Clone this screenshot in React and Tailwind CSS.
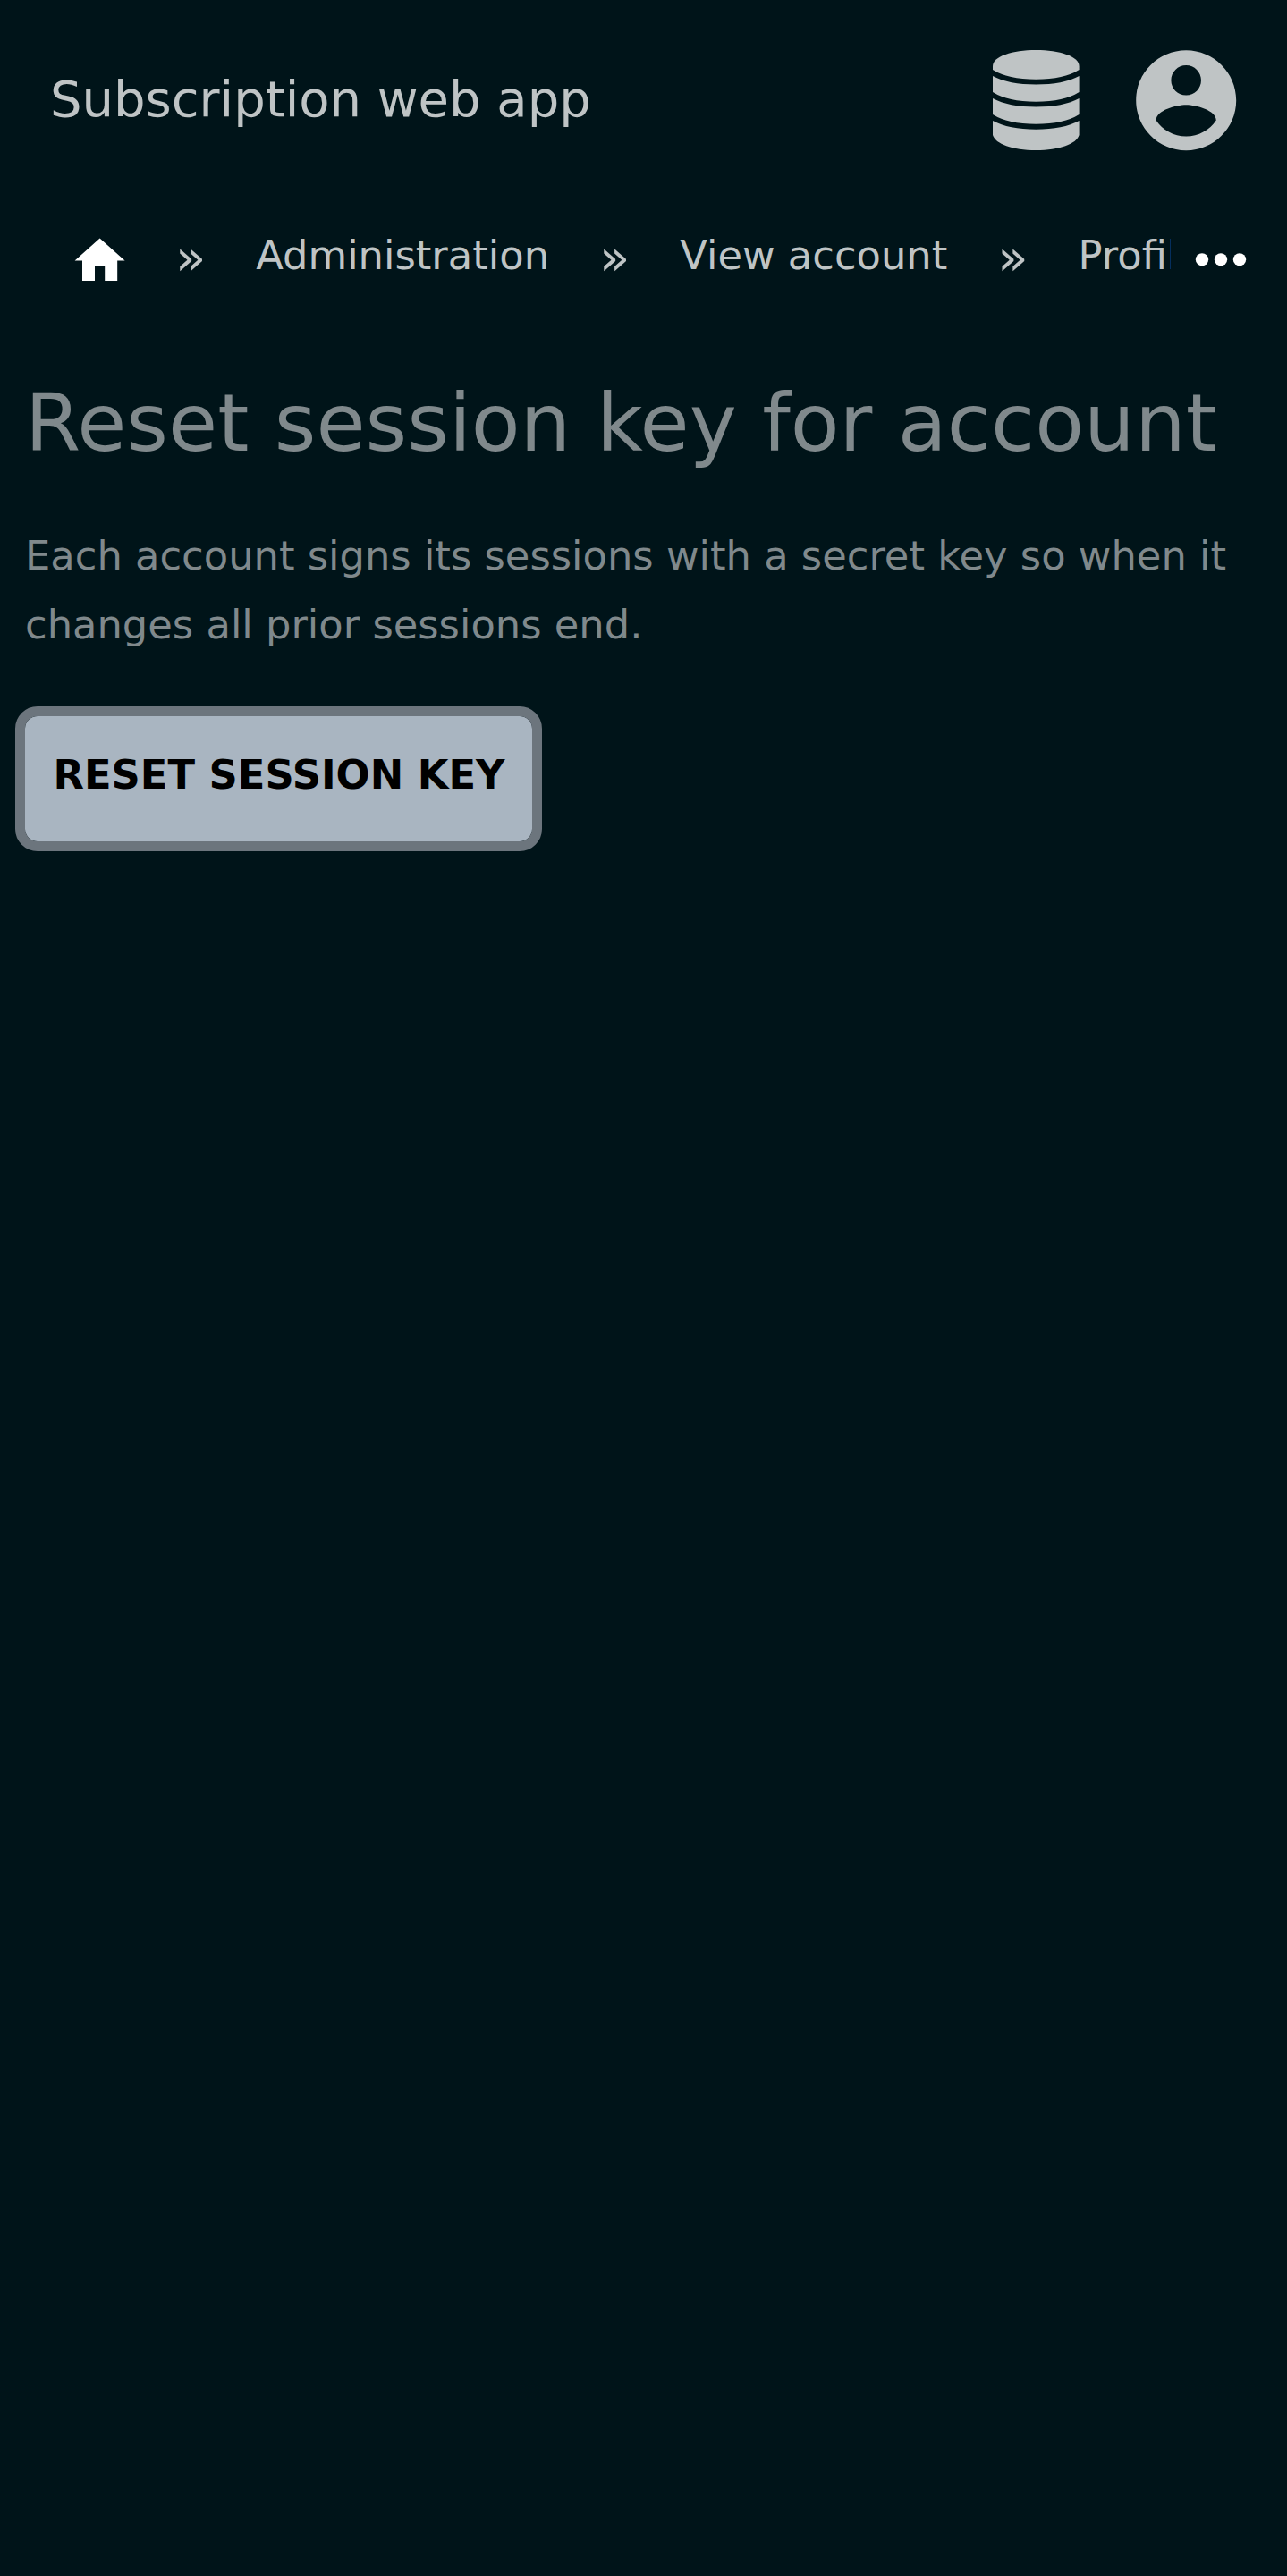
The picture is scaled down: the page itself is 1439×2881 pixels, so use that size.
import React from "react";

function Separator() {
  return <span className="mb-[6px] shrink-0 text-[56px] leading-[84px]">»</span>;
}

function Crumb({ children }) {
  return <span className="mb-[10px] shrink-0 whitespace-nowrap px-[56px]">{children}</span>;
}

export default function App() {
  return (
    <div className="min-h-[2881px] w-full overflow-hidden bg-[#001419] font-['DejaVu_Sans',sans-serif] text-[44.8px] text-[#bfc4c5]">
      <header className="flex h-[224px] items-center justify-between pl-[56px] pr-[45.2px]">
        <span className="mb-[3px] text-[56px] leading-[84px]">Subscription web app</span>
        <div className="flex items-center">
          <svg className="mr-[52.6px] h-[112px] w-[96.6px]" viewBox="0 0 97 112" preserveAspectRatio="none" fill="currentColor">
            <path d="M0 18C0 7 22 0 48.500 0S97 7 97 18V22Q80 32.700 48.500 32.700T0 22Z" />
            <path d="M0 29Q18 38.500 48.500 38.500T97 29V47Q80 57.700 48.500 57.700T0 47Z" />
            <path d="M0 54Q18 63.500 48.500 63.500T97 54V72Q80 82.700 48.500 82.700T0 72Z" />
            <path d="M0 79Q18 88.700 48.500 88.700T97 79V95C94 105 75 112 48.500 112S3 105 0 95Z" />
          </svg>
          <svg className="size-[134.4px]" viewBox="0 0 24 24" fill="currentColor">
            <path d="M12 2C6.480 2 2 6.480 2 12s4.480 10 10 10 10-4.480 10-10S17.520 2 12 2zm0 3c1.660 0 3 1.340 3 3s-1.340 3-3 3-3-1.340-3-3 1.340-3 3-3zm0 14.200c-2.500 0-4.710-1.280-6-3.220.030-1.990 4-3.080 6-3.080 1.990 0 5.970 1.090 6 3.080-1.290 1.940-3.500 3.220-6 3.220z" />
          </svg>
        </div>
      </header>
      <nav className="flex h-[134px] items-center">
        <div className="flex w-[1308.6px] items-center overflow-hidden pl-[78.4px]">
          <svg className="mr-[50.4px] mt-[2px] size-[67.2px] shrink-0 text-white" viewBox="0 0 24 24" fill="currentColor">
            <path d="M10 20v-6h4v6h5v-8h3L12 3 2 12h3v8z" />
          </svg>
          <Separator />
          <Crumb>Administration</Crumb>
          <Separator />
          <Crumb>View account</Crumb>
          <Separator />
          <Crumb>Profile</Crumb>
        </div>
        <svg className="ml-[14.4px] size-[84px] shrink-0 text-white" viewBox="0 0 24 24" fill="currentColor">
          <circle cx="6" cy="11.8" r="2.05" />
          <circle cx="12" cy="11.8" r="2.05" />
          <circle cx="18" cy="11.8" r="2.05" />
        </svg>
      </nav>
      <main className="px-[28px] text-[#80898c]">
        <h1 className="mt-[45px] whitespace-nowrap text-[89.6px] leading-[140px]">Reset session key for account</h1>
        <p className="mt-[40px] leading-[77px]">
          Each account signs its sessions with a secret key so when it changes all prior sessions end.
        </p>
        <button className="mt-[64px] block h-[140.4px] w-[567px] rounded-[14px] bg-[#a9b5c1] pb-[10px] pl-[1px] font-bold text-black outline-[11.2px] outline-[#6c757d]">
          RESET SESSION KEY
        </button>
      </main>
    </div>
  );
}
